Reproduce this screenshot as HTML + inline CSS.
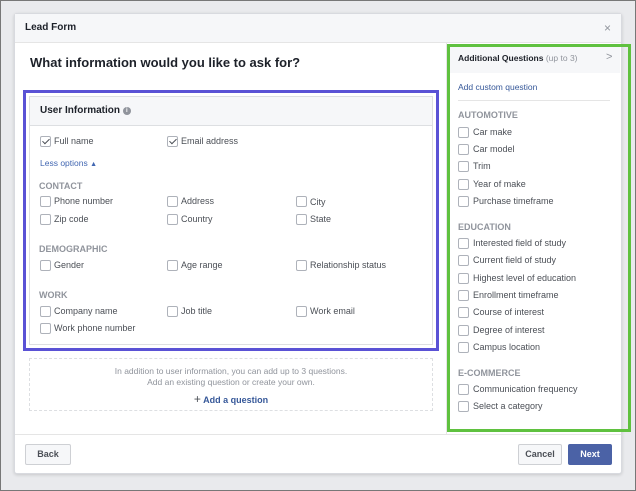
<!DOCTYPE html><html><head><style>
*{margin:0;padding:0;box-sizing:border-box}
body{width:636px;height:491px;background:#e9eaed;font-family:"Liberation Sans",Arial,sans-serif;position:relative;overflow:hidden;}
.a{position:absolute;white-space:nowrap}
.dlg{position:absolute;left:14px;top:13px;width:608px;height:461px;background:#fff;border:1px solid #d8dadf;border-radius:3px;box-shadow:0 1px 3px rgba(0,0,0,.15)}
.cb{position:absolute;width:11px;height:11px;border:1px solid #aeb2ba;border-radius:2px;background:#fff}
.t{font-size:9px;color:#4b4f56}
.h{font-size:9px;color:#90949c;font-weight:bold}
.ck::after{content:"";position:absolute;left:3px;top:0px;width:3px;height:6px;border:solid #4b4f56;border-width:0 1.5px 1.5px 0;transform:rotate(45deg)}
.btn{position:absolute;height:21px;border:1px solid #ced0d4;border-radius:2px;background:#f6f7f9;font-size:9px;font-weight:bold;color:#4b4f56;text-align:center;line-height:19px}
</style></head><body>
<div class="a" style="left:0;top:0;width:636px;height:491px;border:1px solid #777"></div>
<div class="dlg"></div>
<div class="a" style="left:15px;top:14px;width:606px;height:29px;background:#f6f7f9;border-bottom:1px solid #e5e5e5"></div>
<div class="a" style="left:25px;top:22px;font-size:10px;font-weight:bold;color:#1d2129">Lead Form</div>
<div class="a" style="left:604px;top:21px;font-size:12px;color:#90949c">×</div>
<div class="a" style="left:446px;top:43px;width:1px;height:391px;background:#e5e5e5"></div>
<div class="a" style="left:30px;top:55px;font-size:13px;font-weight:bold;color:#1d2129">What information would you like to ask for?</div>
<div class="a" style="left:23px;top:90px;width:416px;height:261px;border:3px solid #5a52d5"></div>
<div class="a" style="left:29px;top:96px;width:404px;height:249px;border:1px solid #dddfe2;background:#fff"></div>
<div class="a" style="left:30px;top:97px;width:402px;height:29px;background:#f6f7f9;border-bottom:1px solid #dddfe2"></div>
<div class="a" style="left:40px;top:105px;font-size:10px;font-weight:bold;color:#1d2129">User Information <span style="display:inline-block;width:8px;height:8px;border-radius:50%;background:#90949c;color:#fff;font-size:6px;text-align:center;line-height:8px;vertical-align:1px">i</span></div>
<div class="cb ck" style="left:40px;top:136px"></div><div class="a t" style="left:54px;top:136px">Full name</div>
<div class="cb ck" style="left:167px;top:136px"></div><div class="a t" style="left:181px;top:136px">Email address</div>
<div class="a" style="left:40px;top:158px;font-size:8.5px;color:#4267b2">Less options <span style="font-size:7px">▲</span></div>
<div class="a h" style="left:39px;top:181px">CONTACT</div>
<div class="cb" style="left:40px;top:196px"></div><div class="a t" style="left:54px;top:196px">Phone number</div>
<div class="cb" style="left:167px;top:196px"></div><div class="a t" style="left:181px;top:196px">Address</div>
<div class="cb" style="left:296px;top:196px"></div><div class="a t" style="left:310px;top:197px">City</div>
<div class="cb" style="left:40px;top:214px"></div><div class="a t" style="left:54px;top:214px">Zip code</div>
<div class="cb" style="left:167px;top:214px"></div><div class="a t" style="left:181px;top:214px">Country</div>
<div class="cb" style="left:296px;top:214px"></div><div class="a t" style="left:310px;top:214px">State</div>
<div class="a h" style="left:39px;top:244px">DEMOGRAPHIC</div>
<div class="cb" style="left:40px;top:260px"></div><div class="a t" style="left:54px;top:260px">Gender</div>
<div class="cb" style="left:167px;top:260px"></div><div class="a t" style="left:181px;top:260px">Age range</div>
<div class="cb" style="left:296px;top:260px"></div><div class="a t" style="left:310px;top:260px">Relationship status</div>
<div class="a h" style="left:39px;top:290px">WORK</div>
<div class="cb" style="left:40px;top:306px"></div><div class="a t" style="left:54px;top:306px">Company name</div>
<div class="cb" style="left:167px;top:306px"></div><div class="a t" style="left:181px;top:306px">Job title</div>
<div class="cb" style="left:296px;top:306px"></div><div class="a t" style="left:310px;top:306px">Work email</div>
<div class="cb" style="left:40px;top:323px"></div><div class="a t" style="left:54px;top:323px">Work phone number</div>
<div class="a" style="left:29px;top:358px;width:404px;height:53px;border:1px dashed #dddfe2"></div>
<div class="a" style="left:29px;top:366px;width:404px;text-align:center;font-size:8.5px;line-height:11px;color:#90949c;white-space:normal">In addition to user information, you can add up to 3 questions.<br>Add an existing question or create your own.</div>
<div class="a" style="left:29px;top:392px;width:404px;text-align:center;font-size:9px;font-weight:bold;color:#365899"><span style="font-size:12px;font-weight:normal;color:#4b4f56">+</span> Add a question</div>
<div class="a" style="left:450px;top:46px;width:170px;height:27px;background:#f6f7f9"></div>
<div class="a" style="left:447px;top:44px;width:184px;height:388px;border:3px solid #5fc13f"></div>
<div class="a" style="left:458px;top:53px;font-size:8.5px;font-weight:bold;color:#1d2129">Additional Questions <span style="font-weight:normal;color:#90949c">(up to 3)</span></div>
<div class="a" style="left:606px;top:51px;font-size:11px;color:#90949c">&gt;</div>
<div class="a" style="left:458px;top:82px;font-size:8.5px;color:#365899">Add custom question</div>
<div class="a" style="left:458px;top:100px;width:152px;height:1px;background:#e5e5e5"></div>
<div class="a h" style="left:458px;top:110px">AUTOMOTIVE</div>
<div class="cb" style="left:458px;top:127px"></div><div class="a t" style="left:473px;top:127px">Car make</div>
<div class="cb" style="left:458px;top:144px"></div><div class="a t" style="left:473px;top:144px">Car model</div>
<div class="cb" style="left:458px;top:161px"></div><div class="a t" style="left:473px;top:161px">Trim</div>
<div class="cb" style="left:458px;top:179px"></div><div class="a t" style="left:473px;top:179px">Year of make</div>
<div class="cb" style="left:458px;top:196px"></div><div class="a t" style="left:473px;top:196px">Purchase timeframe</div>
<div class="a h" style="left:458px;top:222px">EDUCATION</div>
<div class="cb" style="left:458px;top:238px"></div><div class="a t" style="left:473px;top:238px">Interested field of study</div>
<div class="cb" style="left:458px;top:255px"></div><div class="a t" style="left:473px;top:255px">Current field of study</div>
<div class="cb" style="left:458px;top:273px"></div><div class="a t" style="left:473px;top:273px">Highest level of education</div>
<div class="cb" style="left:458px;top:290px"></div><div class="a t" style="left:473px;top:290px">Enrollment timeframe</div>
<div class="cb" style="left:458px;top:307px"></div><div class="a t" style="left:473px;top:307px">Course of interest</div>
<div class="cb" style="left:458px;top:325px"></div><div class="a t" style="left:473px;top:325px">Degree of interest</div>
<div class="cb" style="left:458px;top:342px"></div><div class="a t" style="left:473px;top:342px">Campus location</div>
<div class="a h" style="left:458px;top:368px">E-COMMERCE</div>
<div class="cb" style="left:458px;top:384px"></div><div class="a t" style="left:473px;top:384px">Communication frequency</div>
<div class="cb" style="left:458px;top:401px"></div><div class="a t" style="left:473px;top:401px">Select a category</div>
<div class="a" style="left:15px;top:434px;width:606px;height:1px;background:#e5e5e5"></div>
<div class="btn" style="left:25px;top:444px;width:46px">Back</div>
<div class="btn" style="left:518px;top:444px;width:44px">Cancel</div>
<div class="btn" style="left:568px;top:444px;width:44px;background:#4b62a6;border-color:#4b62a6;color:#fff">Next</div>
</body></html>
